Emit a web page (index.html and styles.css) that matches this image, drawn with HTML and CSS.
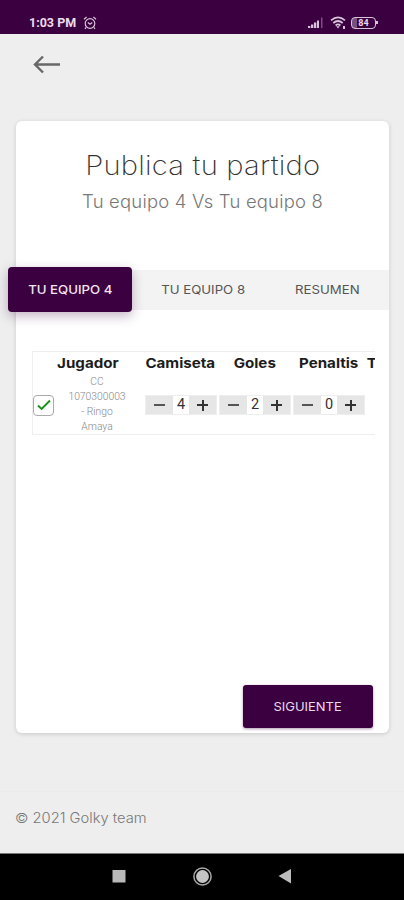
FILE: index.html
```html
<!DOCTYPE html>
<html lang="es">
<head>
<meta charset="utf-8">
<title>Publica tu partido</title>
<link rel="stylesheet" href="styles.css">
</head>
<body>
<div class="screen">
  <header class="status">
    <span class="clock">1:03 PM</span>
    <svg class="alarm" width="14" height="14" viewBox="0 0 14 14" fill="none" stroke="#d8c5da" stroke-width="1.2"><circle cx="7" cy="7.5" r="4.8"/><path d="M1 3.2 3.6 1M13 3.2 10.4 1M4.8 6.5 7 8.3 9.3 6.6M3.2 11.3 2 12.8M10.8 11.3 12 12.8"/></svg>
    <svg class="signal" width="15" height="12" viewBox="0 0 15 12" fill="#d8c5da"><path d="M0 9h2.300v2H0zM3 7.500h2.300V11H3zM6 5.500h2.300V11H6zM9 3.500h2V11H9z"/><path opacity=".4" d="M13 .5h1.500V11H13z"/></svg>
    <svg class="wifi" width="17" height="14" viewBox="0 0 17 14" fill="none" stroke="#d8c5da" stroke-width="1.7"><path d="M1 4.300Q8 -1.500 15 4.300M3.300 7Q8 3 12.700 7M5.600 9.500Q8 7.400 10.400 9.500"/><path fill="#d8c5da" stroke="none" d="M6.300 10.200h3.400L8 12.500zM13 10h2v3h-2z"/></svg>
    <span class="battery"><span>84</span></span>
  </header>

  <nav class="topbar">
    <svg width="28" height="20" viewBox="0 0 28 20" fill="none" stroke="#686868" stroke-width="2.4"><path d="M27 10.500H2M10 2.500 2 10.500 10 18.500"/></svg>
  </nav>

  <main class="card">
    <h1><span class="wide">Publica tu partido</span></h1>
    <h2><span class="wide">Tu equipo 4 Vs Tu equipo 8</span></h2>
    <div class="tabs">
      <div class="tab active"><span class="wide">TU EQUIPO 4</span></div>
      <div class="tab second"><span class="wide">TU EQUIPO 8</span></div>
      <div class="tab third"><span class="wide">RESUMEN</span></div>
    </div>
    <div class="players">
      <div class="head">
        <b class="player">Jugador</b><b>Camiseta</b><b>Goles</b><b class="penalties">Penaltis</b><b class="last">T</b>
      </div>
      <div class="row">
        <span class="check"><svg width="14" height="12" viewBox="0 0 14 12" fill="none" stroke="#1c901c" stroke-width="1.900"><path d="M1 6.500 4.600 10 13 1.500"/></svg></span>
        <div class="name">CC<br>1070300003<br>- Ringo<br>Amaya</div>
        <div class="stepper"><i class="minus"></i><span>4</span><i class="plus"></i></div>
        <div class="stepper"><i class="minus"></i><span>2</span><i class="plus"></i></div>
        <div class="stepper"><i class="minus"></i><span>0</span><i class="plus"></i></div>
      </div>
    </div>
    <div class="next"><span class="wide">SIGUIENTE</span></div>
  </main>

  <footer><span class="wide">© 2021 Golky team</span></footer>

  <div class="system">
    <svg width="14" height="14" viewBox="0 0 14 14"><path fill="#b9b9b9" d="M.5 0h13v12.500H.5z"/></svg>
    <svg width="20" height="20" viewBox="0 0 20 20"><circle cx="10.500" cy="9.500" r="8.600" fill="none" stroke="#aaa" stroke-width="1.500"/><circle cx="10.500" cy="9.500" r="6.400" fill="#c4c4c4"/></svg>
    <svg width="14" height="16" viewBox="0 0 14 16"><path fill="#bcbcbc" d="M.5 7 13 0v14.400z"/></svg>
  </div>
</div>
</body>
</html>
```
FILE: styles.css
```css
* { box-sizing: border-box; }
body { margin: 0; background: #eee; font-family: Inter, "Open Sans", sans-serif; color: #3c3c3c; }
h1, h2 { margin: 0; white-space: nowrap; text-align: center; }
svg { display: block; flex: none; }
.screen { width: 404px; height: 900px; display: flex; flex-direction: column; overflow: hidden; }
.wide { display: inline-block; transform: scaleX(1.08); }

.status { height: 34px; flex: none; background: #3b0040; display: flex; align-items: center; padding: 12px 28px 0 29px; color: #eadcec; }
.clock { font: 700 12.5px/14px Roboto, sans-serif; width: 48px; white-space: nowrap; }
.alarm { margin-left: 6px; }
.signal { margin-left: auto; }
.wifi { margin: 0 4px 0 7px; }
.battery { width: 25px; height: 12px; border: 1.5px solid #d8c5da; border-radius: 4px; font: 700 9px/10px Roboto, sans-serif; text-align: center; position: relative; background: linear-gradient(90deg, #785080 20%, transparent 20%); }
.battery::after { content: ""; position: absolute; right: -3px; top: 3px; width: 2px; height: 3px; background: #d8c5da; }

.topbar { height: 87px; flex: none; padding: 20px 0 0 33px; }

.card { width: 373px; height: 612px; flex: none; margin-left: 16px; background: #fff; border-radius: 6px; box-shadow: 0 1px 4px rgba(0,0,0,.16); display: flex; flex-direction: column; }
h1 { font-size: 27px; line-height: 36px; margin-top: 27px; font-weight: 200; letter-spacing: .2px; color: #333; }
h2 { font-size: 18px; line-height: 26px; margin-top: 5px; font-weight: 300; letter-spacing: .2px; color: #777; }
h2 .wide { transform: scaleX(1.025); }

.tabs { height: 40px; flex: none; margin-top: 55px; background: #f3f3f3; display: flex; align-items: center; }
.tab { font-size: 12px; color: #555; text-align: center; white-space: nowrap; }
.tab .wide { transform: translateY(-1px) scaleX(1.1); }
.active { width: 124px; height: 45px; line-height: 45px; margin: -2px 0 0 -8px; background: #3b0040; border-radius: 4px; color: #f0e5f1; font-weight: 500; box-shadow: 0 4px 12px rgba(59,0,64,.3); }
.active .wide { transform: scaleX(1.1); }
.second { width: 142px; }
.third { width: 106px; }

.players { width: 343px; height: 84px; flex: none; margin: 41px 0 0 16px; overflow: hidden; border: 1px solid #eee; border-right: 0; color: #1c1c1c; }
.head { display: flex; width: 308px; height: 22px; align-items: center; font-size: 13.5px; transform: scaleX(1.12); transform-origin: left; }
.head b { flex: none; font-weight: 700; text-align: center; width: 66px; }
.head .player { width: 98px; }
.head .player + b { width: 67px; }
.head .last { width: 12px; margin-left: 1px; text-align: left; }
.row { display: grid; grid-template-columns: 22px 90px 74px 74px 73px; align-items: center; height: 60px; margin-top: 1px; }
.check { width: 21px; height: 21px; border: 1.5px solid #aaa; border-radius: 4px; display: grid; place-items: center; }
.name { font: 300 10px/14.8px Roboto, sans-serif; color: #888; text-align: center; width: 84px; transform: scaleX(1.03); }
.stepper { display: grid; grid-template-columns: 27px 16px 27px; width: 72px; height: 20px; background: #e6e6e6; border: 1px solid #eee; align-items: center; }
.stepper span { background: #fff; height: 18px; font: 400 14.5px/18px Roboto, sans-serif; text-align: center; color: #333; }
.minus, .plus { width: 11px; height: 11px; margin: 0 auto; background: linear-gradient(#555, #555) center / 11px 2px no-repeat; }
.plus { background: linear-gradient(#333, #333) center / 11px 2px no-repeat, linear-gradient(#333, #333) center / 2px 11px no-repeat; }

.next { width: 130px; height: 43px; margin: auto 16px 5px auto; background: #3b0040; color: #eadcec; border-radius: 3px; font-size: 12px; line-height: 43px; text-align: center; box-shadow: 0 1px 3px rgba(59,0,64,.4); }

footer { flex: 1; margin-top: 58px; border-top: 1px solid #ebebeb; padding: 17px 15px; font-size: 14px; line-height: 18px; font-weight: 300; color: #777; }
footer .wide { transform: scaleX(1.05); transform-origin: left; }
.system { height: 47px; flex: none; background: #000; border-top: 1px solid #777; display: flex; align-items: center; padding-left: 112px; }
.system svg + svg { margin-left: 66px; }
```
